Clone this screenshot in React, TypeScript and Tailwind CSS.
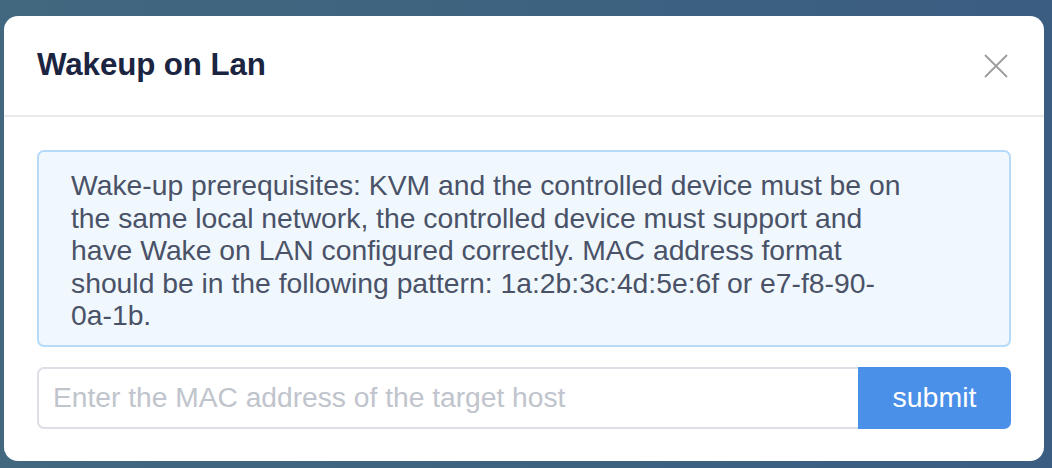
import React, { useState } from "react";

export default function App() {
    const [mac, setMac] = useState("");

    return (
        <div
            className="w-[1052px] h-[468px] overflow-hidden bg-gradient-to-r from-[#41687f] to-[#3a5d81] pl-[4px] pt-[16px]"
            style={{ fontFamily: '"Liberation Sans", Arial, sans-serif' }}
        >
            <div className="w-[1040px] h-[445px] bg-white rounded-[14px] flex flex-col">
                {/* header */}
                <div className="h-[101px] flex items-center justify-between pl-[33px] pr-[36px] border-b-2 border-[#e9e9eb]">
                    <h2 className="text-[31.3px] font-semibold text-[#1b2440] tracking-[-0.1px]">
                        Wakeup on Lan
                    </h2>
                    <button type="button" className="w-[24px] h-[24px] flex items-center justify-center">
                        <svg width="24" height="24" viewBox="0 0 24 24" fill="none">
                            <path d="M1 1L23 23M23 1L1 23" stroke="#9d9d9d" strokeWidth="1.8" />
                        </svg>
                    </button>
                </div>

                {/* body */}
                <div className="flex flex-col gap-[20px] px-[33px] pt-[33px]">
                    <div className="bg-[#f0f8fd] border-2 border-[#b5dafa] rounded-[7px] pl-[32px] pr-[60px] pt-[17px] pb-[13px]">
                        <p className="text-[28.3px] leading-[32.5px] text-[#4a5268] max-w-[835px]">
                            Wake-up prerequisites: KVM and the controlled device must be on the same local network, the
                            controlled device must support and have Wake on LAN configured correctly. MAC address format
                            should be in the following pattern: 1a:2b:3c:4d:5e:6f or e7-f8-90-0a-1b.
                        </p>
                    </div>

                    <div className="flex h-[62px]">
                        <input
                            type="text"
                            value={mac}
                            onChange={(e) => setMac(e.target.value)}
                            placeholder="Enter the MAC address of the target host"
                            className="flex-1 min-w-0 border-2 border-r-0 border-[#dcdfe6] rounded-l-[7px] px-[14px] text-[28.2px] text-[#4a5268] placeholder:text-[#c0c4cc] outline-none"
                        />
                        <button
                            type="button"
                            className="w-[153px] bg-[#4a8fe8] rounded-r-[7px] text-white text-[28.5px]"
                        >
                            submit
                        </button>
                    </div>
                </div>
            </div>
        </div>
    );
}
